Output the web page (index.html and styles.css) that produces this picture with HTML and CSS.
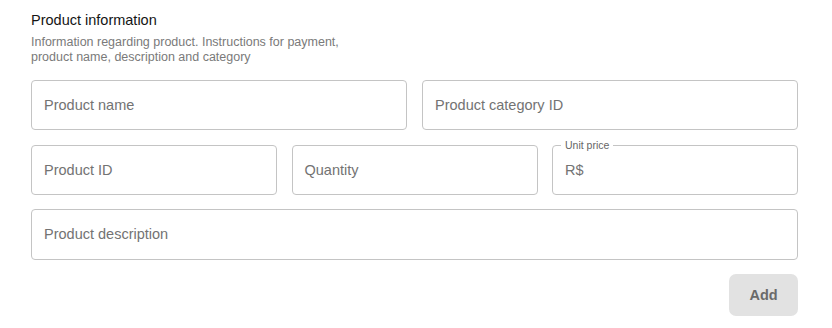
FILE: index.html
```html
<!DOCTYPE html>
<html>
<head>
<meta charset="utf-8">
<link rel="stylesheet" href="styles.css">
</head>
<body>
<div class="page">
  <div class="header">
    <h2 class="title">Product information</h2>
    <p class="subtitle">Information regarding product. Instructions for payment,<br>product name, description and category</p>
  </div>
  <div class="row two">
    <div class="field"><span class="ph">Product name</span></div>
    <div class="field"><span class="ph">Product category ID</span></div>
  </div>
  <div class="row three">
    <div class="field"><span class="ph">Product ID</span></div>
    <div class="field"><span class="ph">Quantity</span></div>
    <div class="field labeled"><span class="legend">Unit price</span><span class="ph">R$</span></div>
  </div>
  <div class="row one">
    <div class="field tall"><span class="ph">Product description</span></div>
  </div>
  <div class="actions">
    <button class="btn">Add</button>
  </div>
</div>
</body>
</html>
```

FILE: styles.css
```css
* { box-sizing: border-box; }
html, body { margin: 0; padding: 0; background: #fff; }
body { font-family: "Liberation Sans", Arial, sans-serif; }
.page {
  width: 832px;
  padding: 11px 34px 0 31px;
  display: flex;
  flex-direction: column;
}
.header { display: flex; flex-direction: column; gap: 6px; margin-bottom: 15px; }
.title { margin: 0; font-size: 14.5px; font-weight: 500; color: #151515; line-height: 18px; }
.subtitle { margin: 0; font-size: 12.5px; line-height: 15px; color: #7a7a7a; }
.row { display: grid; gap: 15px; margin-bottom: 15px; }
.row.two { grid-template-columns: 1fr 1fr; }
.row.three { grid-template-columns: 1fr 1fr 1fr; gap: 14.5px; margin-bottom: 14px; }
.row.one { grid-template-columns: 1fr; margin-bottom: 14px; }
.field {
  position: relative;
  height: 50px;
  border: 1px solid #c4c4c4;
  border-radius: 4px;
  display: flex;
  align-items: center;
  padding: 0 12px 1px;
}
.field.tall { height: 51px; }
.ph { font-size: 14.5px; color: #737373; }
.legend {
  position: absolute;
  top: -7px;
  left: 8px;
  padding: 0 4px;
  background: #fff;
  font-size: 10.5px;
  line-height: 12px;
  color: #666;
}
.actions { display: flex; justify-content: flex-end; }
.btn {
  width: 69px;
  height: 42px;
  border: none;
  border-radius: 7px;
  background: #e2e2e2;
  color: #6a6a6a;
  font-family: inherit;
  font-size: 14.5px;
  font-weight: 600;
}
```
